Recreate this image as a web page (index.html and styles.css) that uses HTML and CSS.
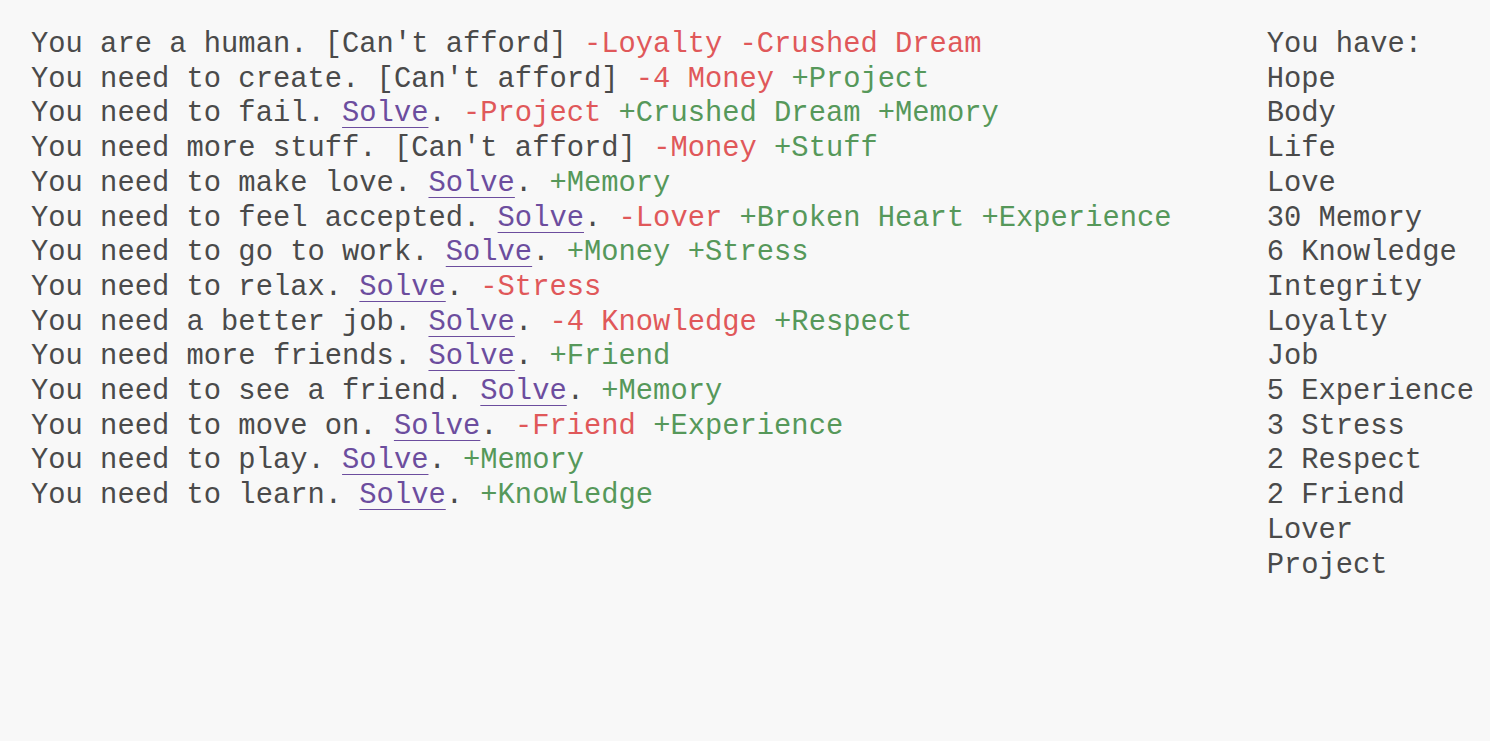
FILE: index.html
```html
<!DOCTYPE html>
<html>
<head>
<meta charset="utf-8">
<link rel="stylesheet" href="styles.css">
</head>
<body>
<div class="page">
  <div class="needs">
    <div class="line">You are a human. [Can't afford] <span class="neg">-Loyalty</span> <span class="neg">-Crushed Dream</span></div>
    <div class="line">You need to create. [Can't afford] <span class="neg">-4 Money</span> <span class="pos">+Project</span></div>
    <div class="line">You need to fail. <a class="solve" href="#">Solve</a>. <span class="neg">-Project</span> <span class="pos">+Crushed Dream</span> <span class="pos">+Memory</span></div>
    <div class="line">You need more stuff. [Can't afford] <span class="neg">-Money</span> <span class="pos">+Stuff</span></div>
    <div class="line">You need to make love. <a class="solve" href="#">Solve</a>. <span class="pos">+Memory</span></div>
    <div class="line">You need to feel accepted. <a class="solve" href="#">Solve</a>. <span class="neg">-Lover</span> <span class="pos">+Broken Heart</span> <span class="pos">+Experience</span></div>
    <div class="line">You need to go to work. <a class="solve" href="#">Solve</a>. <span class="pos">+Money</span> <span class="pos">+Stress</span></div>
    <div class="line">You need to relax. <a class="solve" href="#">Solve</a>. <span class="neg">-Stress</span></div>
    <div class="line">You need a better job. <a class="solve" href="#">Solve</a>. <span class="neg">-4 Knowledge</span> <span class="pos">+Respect</span></div>
    <div class="line">You need more friends. <a class="solve" href="#">Solve</a>. <span class="pos">+Friend</span></div>
    <div class="line">You need to see a friend. <a class="solve" href="#">Solve</a>. <span class="pos">+Memory</span></div>
    <div class="line">You need to move on. <a class="solve" href="#">Solve</a>. <span class="neg">-Friend</span> <span class="pos">+Experience</span></div>
    <div class="line">You need to play. <a class="solve" href="#">Solve</a>. <span class="pos">+Memory</span></div>
    <div class="line">You need to learn. <a class="solve" href="#">Solve</a>. <span class="pos">+Knowledge</span></div>
  </div>
  <div class="have">
    <div class="line">You have:</div>
    <div class="line">Hope</div>
    <div class="line">Body</div>
    <div class="line">Life</div>
    <div class="line">Love</div>
    <div class="line">30 Memory</div>
    <div class="line">6 Knowledge</div>
    <div class="line">Integrity</div>
    <div class="line">Loyalty</div>
    <div class="line">Job</div>
    <div class="line">5 Experience</div>
    <div class="line">3 Stress</div>
    <div class="line">2 Respect</div>
    <div class="line">2 Friend</div>
    <div class="line">Lover</div>
    <div class="line">Project</div>
  </div>
</div>
</body>
</html>
```

FILE: styles.css
```css
html, body {
  margin: 0;
  padding: 0;
  background: #f8f8f8;
}
body {
  font-family: "Courier New", "Nimbus Mono PS", "FreeMono", "Liberation Mono", monospace;
  font-size: 28.8px;
  line-height: 34.7px;
  color: #4a4a4a;
}
.page {
  display: flex;
  padding: 28px 16px 0 31px;
}
.needs {
  flex: 1;
}
.have {
  flex: none;
}
.line {
  white-space: pre;
}
.neg {
  color: #e0585a;
}
.pos {
  color: #56985a;
}
.solve {
  color: #6c4d9e;
  text-decoration: underline;
  text-decoration-thickness: 1px;
  text-underline-offset: 6px;
}
```
